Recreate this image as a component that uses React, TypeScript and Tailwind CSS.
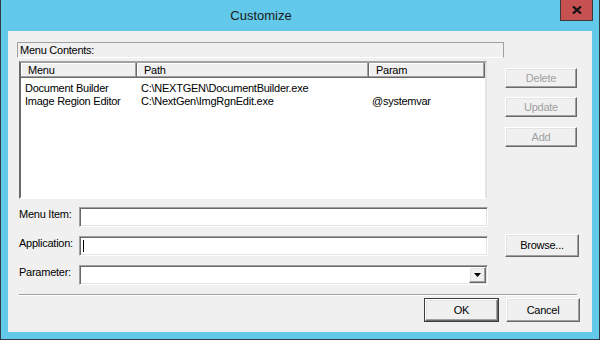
const font = "font-['Liberation_Sans',Arial,sans-serif]";

const raised =
  "border border-t-white border-l-white border-b-[#696969] border-r-[#696969] shadow-[inset_-1px_-1px_0_#a0a0a0,inset_1px_1px_0_#e3e3e3] bg-[#f0f0f0]";
const sunken =
  "border border-t-[#a0a0a0] border-l-[#a0a0a0] border-b-white border-r-white shadow-[inset_1px_1px_0_#696969,inset_-1px_-1px_0_#e3e3e3] bg-white";

const Button = ({
  label,
  w,
  h,
  disabled,
  isDefault,
}: {
  label: string;
  w: string;
  h: string;
  disabled?: boolean;
  isDefault?: boolean;
}) => {
  if (isDefault) {
    return (
      <div className={`${w} ${h} border border-[#3c3c3c] flex`}>
        <div className={`flex-1 ${raised} flex items-center justify-center text-black`}>{label}</div>
      </div>
    );
  }
  return (
    <div
      className={`${w} ${h} ${raised} flex items-center justify-center ${
        disabled ? "text-[#a0a0a0]" : "text-black"
      }`}
    >
      {label}
    </div>
  );
};

const rows = [
  { menu: "Document Builder", path: "C:\\NEXTGEN\\DocumentBuilder.exe", param: "" },
  { menu: "Image Region Editor", path: "C:\\NextGen\\ImgRgnEdit.exe", param: "@systemvar" },
];

const headerCell =
  "h-[15px] pl-[7px] pt-[1px] leading-[13px] border-b border-r border-[#696969] shadow-[inset_-1px_-1px_0_#a0a0a0,inset_1px_1px_0_#fff]";

export default function App() {
  return (
    <div
      className={`w-[600px] h-[340px] bg-[#63c9ea] border-x border-b border-[#2f3b40] flex flex-col text-[11px] tracking-[-0.25px] text-black ${font}`}
    >
      {/* title bar */}
      <div className="h-[31px] flex shrink-0">
        <div className="w-[520px] text-center text-[13px] font-normal tracking-normal pt-[8px] leading-[15px] text-[#1a1a1a]">
          Customize
        </div>
        <div className="ml-[39px] w-[33px] h-[21px] bg-[#c75050] border-x border-b border-[#3a3a3a] flex items-center justify-center">
          <svg width="10" height="8" viewBox="0 0 10 8">
            <path d="M1 0.5 L9 7.5 M9 0.5 L1 7.5" stroke="#111" strokeWidth="2.2" />
          </svg>
        </div>
      </div>

      {/* client area */}
      <div className="ml-[7px] w-[584px] h-[301px] bg-[#f0f0f0] flex flex-col">
        <div className="mt-[11px] ml-[9px] w-[487px] h-[16px] border border-[#a0a0a0] border-b-white pl-[2px] pt-[1px] leading-[13px]">
          Menu Contents:
        </div>

        <div className="mt-[3px] flex">
          <div className="ml-[11px] w-[468px] h-[138px] border-2 border-t-[#a0a0a0] border-l-[#696969] border-b-white border-r-[#e3e3e3] bg-white flex flex-col">
            <div className="flex bg-[#f0f0f0] w-[464px]">
              <div className={`${headerCell} w-[116px]`}>Menu</div>
              <div className={`${headerCell} w-[232px]`}>Path</div>
              <div className={`${headerCell} w-[116px]`}>Param</div>
            </div>
            <div className="pt-[4px] flex flex-col">
              {rows.map((r) => (
                <div key={r.menu} className="flex h-[13px] leading-[13px] whitespace-nowrap">
                  <div className="w-[116px] pl-[4px]">{r.menu}</div>
                  <div className="w-[232px] pl-[4px]">{r.path}</div>
                  <div className="w-[116px] pl-[3px]">{r.param}</div>
                </div>
              ))}
            </div>
          </div>

          <div className="ml-[18px] pt-[7px] flex flex-col">
            <Button label="Delete" w="w-[72px]" h="h-[20px]" disabled />
            <div className="mt-[9px]">
              <Button label="Update" w="w-[72px]" h="h-[20px]" disabled />
            </div>
            <div className="mt-[10px]">
              <Button label="Add" w="w-[72px]" h="h-[20px]" disabled />
            </div>
          </div>
        </div>

        {/* Menu Item */}
        <div className="mt-[8px] flex items-start">
          <div className="ml-[11px] w-[60px] mt-[1px] leading-[13px]">Menu Item:</div>
          <div className={`w-[409px] h-[20px] ${sunken}`} />
        </div>

        {/* Application */}
        <div className="mt-[7px] flex items-start">
          <div className="ml-[11px] w-[60px] mt-[3px] leading-[13px]">Application:</div>
          <div className={`mt-[2px] w-[409px] h-[20px] ${sunken} flex items-center`}>
            <span className="ml-[3px] w-px h-[12px] bg-black" />
          </div>
          <div className="ml-[17px]">
            <Button label="Browse..." w="w-[74px]" h="h-[23px]" />
          </div>
        </div>

        {/* Parameter */}
        <div className="mt-[8px] flex items-start">
          <div className="ml-[11px] w-[60px] mt-[1px] leading-[13px]">Parameter:</div>
          <div className={`w-[409px] h-[20px] ${sunken} flex justify-end p-[1px]`}>
            <div className={`w-[17px] h-full ${raised} flex items-center justify-center`}>
              <svg width="7" height="4" viewBox="0 0 7 4">
                <path d="M0 0 H7 L3.5 4 Z" fill="#000" />
              </svg>
            </div>
          </div>
        </div>

        <div className="mt-[9px] ml-[11px] w-[558px] h-[2px] border-t border-[#a0a0a0] border-b border-b-white" />

        <div className="mt-[2px] flex justify-end pr-[12px] gap-[7px]">
          <Button label="OK" w="w-[75px]" h="h-[24px]" isDefault />
          <Button label="Cancel" w="w-[74px]" h="h-[24px]" />
        </div>
      </div>
    </div>
  );
}
